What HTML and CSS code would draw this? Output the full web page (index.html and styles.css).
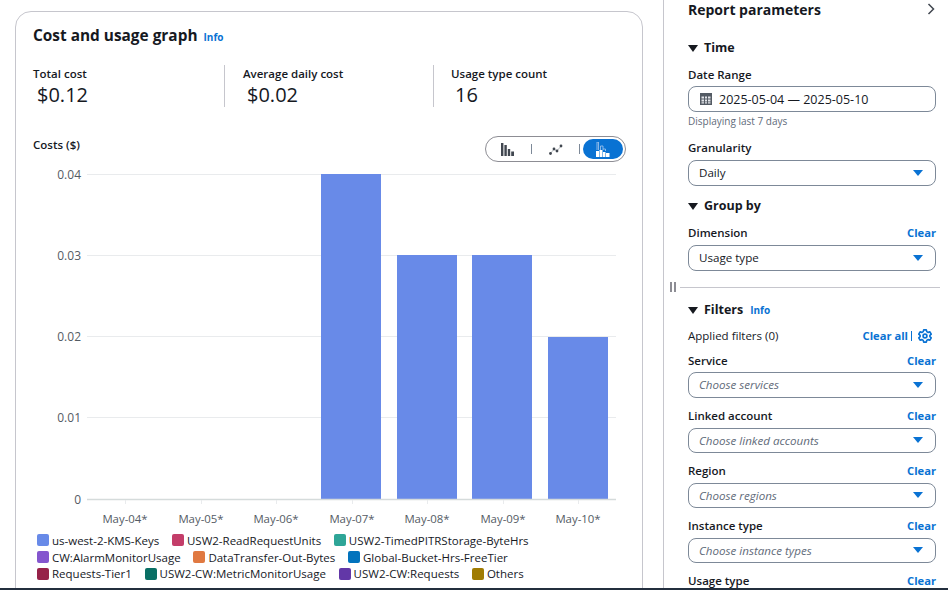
FILE: index.html
```html
<!DOCTYPE html>
<html lang="en">
<head>
<meta charset="utf-8">
<title>Cost and usage graph</title>
<link rel="stylesheet" href="styles.css">
</head>
<body>
<div class="page">
  <main class="main">
    <section class="card">
      <header class="card-head"><h2>Cost and usage graph</h2><a class="info">Info</a></header>
      <div class="stats">
        <div class="stat"><div class="stat-label">Total cost</div><div class="stat-value">$0.12</div></div>
        <div class="stat"><div class="stat-label">Average daily cost</div><div class="stat-value">$0.02</div></div>
        <div class="stat"><div class="stat-label">Usage type count</div><div class="stat-value">16</div></div>
      </div>
      <div class="chart-head">
        <div class="chart-title">Costs ($)</div>
        <div class="toggle">
          <span class="seg">
            <svg width="14" height="13" viewBox="0 0 14 13"><path fill="#414750" d="M0 0h2.400v13H0zM3.400 2h2.400v11H3.400zM6.800 6h2.400v7H6.800zM10.200 8.500h2.800V13h-2.800z"/></svg>
          </span>
          <i class="sep"></i>
          <span class="seg seg-dots">
            <svg width="14" height="11" viewBox="0 0 14 11"><path fill="none" stroke="#9aa0a8" stroke-width=".7" d="M1.500 9.500 5 5l3 2 4-5"/><g fill="#414750"><circle cx="1.500" cy="9.500" r="1.400"/><circle cx="5" cy="5" r="1.400"/><circle cx="8" cy="7" r="1.400"/><circle cx="12" cy="2" r="1.400"/></g></svg>
          </span>
          <i class="sep"></i>
          <span class="seg seg-on">
            <svg width="14" height="15" viewBox="0 0 14 15"><path fill="none" stroke="#a9c9ef" stroke-width=".8" d="M1 0v8M1 0h1.500v8M4.500 4v4M4.500 4H7v4M7 7h2.500v2"/><path fill="#fff" d="M0 9h3v6H0zM3.500 8h3v7h-3zM7 10h2.500v5H7zM10 11h3.500v4H10z"/></svg>
          </span>
        </div>
      </div>
      <svg class="chart" width="606" height="368" viewBox="0 0 606 368">
        <g class="grid">
          <line x1="70" x2="599" y1="13.500" y2="13.500"/>
          <line x1="70" x2="599" y1="94.500" y2="94.500"/>
          <line x1="70" x2="599" y1="175.500" y2="175.500"/>
          <line x1="70" x2="599" y1="256.500" y2="256.500"/>
        </g>
        <g class="bars">
          <rect x="304" y="13" width="60" height="325"/>
          <rect x="380" y="94" width="60" height="244"/>
          <rect x="455" y="94" width="60" height="244"/>
          <rect x="531" y="176" width="60" height="162"/>
        </g>
        <line class="axis" x1="70" x2="599" y1="338.500" y2="338.500"/>
        <g class="ticks">
          <line x1="108.500" x2="108.500" y1="339" y2="343"/>
          <line x1="184.500" x2="184.500" y1="339" y2="343"/>
          <line x1="259.500" x2="259.500" y1="339" y2="343"/>
          <line x1="335.500" x2="335.500" y1="339" y2="343"/>
          <line x1="410.500" x2="410.500" y1="339" y2="343"/>
          <line x1="486.500" x2="486.500" y1="339" y2="343"/>
          <line x1="561.500" x2="561.500" y1="339" y2="343"/>
        </g>
        <g class="ylabels">
          <text x="64" y="18">0.04</text>
          <text x="64" y="99">0.03</text>
          <text x="64" y="180">0.02</text>
          <text x="64" y="261">0.01</text>
          <text x="64" y="343">0</text>
        </g>
        <g class="xlabels">
          <text x="108" y="362">May-04*</text>
          <text x="184" y="362">May-05*</text>
          <text x="259" y="362">May-06*</text>
          <text x="335" y="362">May-07*</text>
          <text x="410" y="362">May-08*</text>
          <text x="486" y="362">May-09*</text>
          <text x="561" y="362">May-10*</text>
        </g>
      </svg>
      <ul class="legend">
        <li><i class="c1"></i>us-west-2-KMS-Keys</li>
        <li><i class="c2"></i>USW2-ReadRequestUnits</li>
        <li><i class="c3"></i>USW2-TimedPITRStorage-ByteHrs</li>
        <li class="brk"></li>
        <li><i class="c4"></i>CW:AlarmMonitorUsage</li>
        <li><i class="c5"></i>DataTransfer-Out-Bytes</li>
        <li><i class="c6"></i>Global-Bucket-Hrs-FreeTier</li>
        <li class="brk"></li>
        <li><i class="c7"></i>Requests-Tier1</li>
        <li><i class="c8"></i>USW2-CW:MetricMonitorUsage</li>
        <li><i class="c9"></i>USW2-CW:Requests</li>
        <li><i class="c10"></i>Others</li>
      </ul>
    </section>
  </main>
  <aside class="panel">
    <div class="panel-head">
      <h3>Report parameters</h3>
      <svg class="chev" width="10" height="14" viewBox="0 0 10 14"><path fill="none" stroke="#414750" stroke-width="1.500" d="M2.500 2 7.500 7l-5 5"/></svg>
    </div>
    <div class="section-title sec-time"><i class="caret"></i>Time</div>
    <div class="field-label lbl-date"><span>Date Range</span></div>
    <div class="box box-date">
      <svg width="12" height="12" viewBox="0 0 12 12"><rect width="12" height="12" fill="#545b64"/><path fill="#e4e6ea" d="M1.500 3.500h2.500v2H1.500zM5 3.500h2v2H5zM8 3.500h2.500v2H8zM1.500 6.500h2.500v2H1.500zM5 6.500h2v2H5zM8 6.500h2.500v2H8zM1.500 9.300h2.500v1.200H1.500zM5 9.300h2v1.200H5zM8 9.300h2.500v1.200H8z"/></svg>
      <span>2025-05-04 — 2025-05-10</span>
    </div>
    <div class="hint">Displaying last 7 days</div>
    <div class="field-label lbl-gran"><span>Granularity</span></div>
    <div class="box"><span>Daily</span><i class="arrow"></i></div>
    <div class="section-title sec-group"><i class="caret"></i>Group by</div>
    <div class="field-label lbl-dim"><span>Dimension</span><a>Clear</a></div>
    <div class="box"><span>Usage type</span><i class="arrow"></i></div>
    <div class="divider"><span class="handle"></span><span class="rule"></span></div>
    <div class="section-title sec-filters"><i class="caret"></i>Filters<a class="info info-f">Info</a></div>
    <div class="applied">
      <span>Applied filters (0)</span>
      <span class="applied-r"><a>Clear all</a><i class="bar"></i>
        <svg width="14" height="14" viewBox="0 0 16 16"><path fill="none" stroke="#0972d3" stroke-width="1.900" stroke-linejoin="round" d="M6.500 1h3l.5 2 1.600.9 2-.6 1.500 2.600-1.500 1.400v1.400l1.500 1.400-1.500 2.600-2-.6-1.600.9-.5 2h-3l-.5-2-1.600-.9-2 .6L.9 10.100l1.500-1.400V7.300L.9 5.900l1.500-2.600 2 .6L6 3z"/><circle cx="8" cy="8" r="2.200" fill="none" stroke="#0972d3" stroke-width="1.900"/></svg>
      </span>
    </div>
    <div class="field-label lbl-f lbl-first"><span>Service</span><a>Clear</a></div>
    <div class="box box-ph box-service"><em>Choose services</em><i class="arrow"></i></div>
    <div class="field-label lbl-f"><span>Linked account</span><a>Clear</a></div>
    <div class="box box-ph"><em>Choose linked accounts</em><i class="arrow"></i></div>
    <div class="field-label lbl-f"><span>Region</span><a>Clear</a></div>
    <div class="box box-ph"><em>Choose regions</em><i class="arrow"></i></div>
    <div class="field-label lbl-f"><span>Instance type</span><a>Clear</a></div>
    <div class="box box-ph"><em>Choose instance types</em><i class="arrow"></i></div>
    <div class="field-label lbl-f"><span>Usage type</span><a>Clear</a></div>
  </aside>
</div>
<div class="bottom-edge"></div>
</body>
</html>
```
FILE: styles.css
```css
* { box-sizing: border-box; }
html, body { margin: 0; height: 590px; overflow: hidden; background: #fff; }
body { font-family: "Open Sans", "Noto Sans", "Liberation Sans", sans-serif; color: #16191f; font-size: 11.500px; position: relative; }
.page { display: flex; height: 590px; overflow: hidden; }
.main { width: 663px; flex: none; padding: 11px 21px 0 15px; }
.card { width: 628px; height: 640px; border: 1px solid #c6c6cd; border-radius: 16px; padding: 0 0 0 17px; }
.card-head { display: flex; align-items: baseline; gap: 6px; height: 38px; padding-top: 12px; }
.card-head h2 { margin: 0; font-size: 15.400px; line-height: 24px; font-weight: 700; }
a { color: #0972d3; font-weight: 700; }
.info { font-size: 10px; }
.stats { display: flex; margin-top: 15px; height: 42px; }
.stat { width: 192px; }
.stat + .stat { width: 210px; border-left: 1px solid #c6c6cd; padding-left: 17px; }
.stat:nth-child(2) { padding-left: 18px; }
.stat-label { font-size: 11.500px; font-weight: 600; line-height: 18px; }
.stat-value { font-size: 20px; line-height: 23px; padding-left: 4px; }
.chart-head { display: flex; justify-content: space-between; align-items: flex-start; margin-top: 29px; height: 26px; padding-right: 16px; }
.chart-title { font-size: 11.500px; font-weight: 600; line-height: 16px; margin-top: 1px; }
.toggle { display: flex; align-items: center; flex: none; width: 141px; height: 26px; border: 1px solid #8d8d94; border-radius: 13px; padding: 2px 2px 2px 15px; }
.seg { display: flex; flex: none; align-items: center; justify-content: center; width: 14px; }
.seg-dots { margin-left: 17px; }
.sep { flex: none; width: 1px; height: 10px; background: #7d8998; margin-left: 16px; }
.seg-on { width: 40px; height: 20px; background: #0972d3; border-radius: 10px; margin-left: 3px; }
.chart { display: block; margin: -1px 0 0 -16px; }
.grid line { stroke: #e9ebed; stroke-width: 1; }
.axis { stroke: #d5dbdb; stroke-width: 1.500; }
.ticks line { stroke: #e9ebed; stroke-width: 1; }
.bars rect { fill: #688ae8; }
.ylabels text { font-size: 12px; fill: #545b64; text-anchor: end; }
.xlabels text { font-size: 11.400px; fill: #545b64; text-anchor: middle; }
.legend { list-style: none; margin: 3px 0 0 4px; padding: 0; display: flex; flex-wrap: wrap; column-gap: 12.700px; width: 580px; }
.legend li { display: flex; align-items: center; height: 16.800px; font-size: 11.500px; color: #16191f; gap: 3px; white-space: nowrap; }
.legend .brk { flex-basis: 100%; height: 0; }
.legend i { width: 12px; height: 12px; border-radius: 2px; display: block; }
.c1 { background: #688ae8; }
.c2 { background: #c33d69; }
.c3 { background: #2ea597; }
.c4 { background: #8456ce; }
.c5 { background: #e07941; }
.c6 { background: #0273bd; }
.c7 { background: #962249; }
.c8 { background: #096f64; }
.c9 { background: #6237a7; }
.c10 { background: #a07c03; }
.panel { flex: 1; border-left: 1px solid #c6c6cd; padding: 0 12px 0 24px; }
.panel-head { display: flex; justify-content: space-between; align-items: center; height: 20px; }
.panel-head h3 { margin: 0; font-size: 14px; font-weight: 700; line-height: 20px; }
.chev { margin-top: -2px; }
.section-title { display: flex; align-items: center; font-size: 12.500px; font-weight: 700; line-height: 18px; color: #16191f; }
.caret { width: 0; height: 0; border-left: 5px solid transparent; border-right: 5px solid transparent; border-top: 7px solid #16191f; margin-right: 6px; display: block; }
.sec-time { margin-top: 19px; }
.sec-group { margin-top: 11px; }
.sec-filters { margin-top: 8px; }
.info-f { margin-left: 7px; font-size: 10px; }
.field-label { display: flex; justify-content: space-between; font-size: 11.500px; font-weight: 600; line-height: 16px; }
.field-label a, .applied a { font-size: 11.200px; }
.lbl-date { margin-top: 10px; }
.lbl-gran { margin-top: 12px; }
.lbl-dim { margin-top: 10px; }
.lbl-f { margin-top: 10px; }
.lbl-first { margin-top: 9px; }
.box { display: flex; align-items: center; height: 26px; margin-top: 4px; border: 1px solid #7d8998; border-radius: 8px; padding: 0 10px 1px; font-size: 11.600px; }
.box-date { gap: 7px; padding: 0 11px; font-size: 12.500px; margin-top: 3px; }
.box-ph { height: 25px; }
.box-service { height: 26px; margin-top: 3px; }
.box-ph em { color: #5f6b7a; font-style: italic; }
.arrow { margin-left: auto; width: 0; height: 0; border-left: 5px solid transparent; border-right: 5px solid transparent; border-top: 6px solid #0972d3; margin-right: 2px; }
.hint { font-size: 10px; line-height: 14px; color: #5f6b7a; margin-top: 2px; }
.divider { display: flex; align-items: center; margin: 10px -4px 0 -18px; height: 12px; }
.handle { width: 6px; height: 10px; border-left: 2px solid #8d8d94; border-right: 2px solid #8d8d94; margin-right: 4px; }
.rule { flex: 1; height: 1px; background: #c6c6cd; }
.applied { display: flex; justify-content: space-between; align-items: center; margin-top: 9px; line-height: 16px; }
.applied-r { display: flex; align-items: center; margin-right: 4px; }
.bar { width: 1px; height: 10px; background: #0972d3; margin: 0 6px 0 3px; }
.bottom-edge { position: absolute; left: 0; right: 0; bottom: 0; height: 2px; background: #232f3e; }
```
